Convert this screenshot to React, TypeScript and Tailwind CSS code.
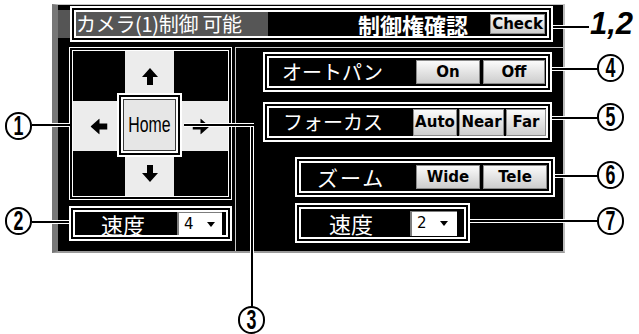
const jp = "font-['Noto_Sans_CJK_JP',sans-serif]";
const btn =
  "flex items-center justify-center overflow-hidden border border-[#8c8c8c] bg-linear-to-b from-[#fbfbfb] to-[#cdcdcd] font-['DejaVu_Sans',sans-serif] text-[15px] font-bold leading-none text-black";
const hl = "border-[6px] border-double border-white bg-black";

function Arrow({ className }: { className: string }) {
  return (
    <svg width="16" height="17" viewBox="0 0 16 17" className={className}>
      <path d="M8 0 L16 9 L11 9 L11 17 L5 17 L5 9 L0 9 Z" fill="black" />
    </svg>
  );
}

function Circled({ n, className }: { n: string; className: string }) {
  return (
    <div
      className={`absolute flex h-[28px] w-[27px] items-center justify-center rounded-full border-2 border-black bg-white ${className}`}
    >
      <span className="scale-x-[0.66] font-['Liberation_Sans',sans-serif] text-[27px] font-bold leading-none text-black">
        {n}
      </span>
    </div>
  );
}

function Select({ value, className }: { value: string; className: string }) {
  return (
    <div
      className={`flex items-center border-l-2 border-t border-[#7d7d7d] bg-white pl-[5px] ${className}`}
    >
      <span className="font-['DejaVu_Sans',sans-serif] text-[15px] leading-none text-black">{value}</span>
      <svg width="8" height="5" viewBox="0 0 8 5" className="ml-[13px]">
        <path d="M0 0 L8 0 L4 5 Z" fill="black" />
      </svg>
    </div>
  );
}

export default function App() {
  return (
    <div className="relative h-[334px] w-[639px] overflow-hidden bg-white">
      {/* camera panel */}
      <div className="ml-[52px] mt-[4px] flex h-[249px] w-[513px] flex-col border-b-2 border-l-[6px] border-r-2 border-t border-b-[#9a9a9a] border-l-[#777777] border-r-[#bdbdbd] border-t-[#c4c4c4] bg-black">
        {/* title */}
        <div className="mt-[1px] flex h-[36px] items-center">
          <div className="h-[28px] w-[12px] bg-[#555555]" />
          <div className={`h-[36px] w-[483px] ${hl}`}>
            <div className="flex h-full">
              <div
                className={`flex w-[192px] items-center whitespace-nowrap bg-[#565656] text-[20px] leading-none tracking-[-0.3px] text-white ${jp}`}
              >
                カメラ(1)制御 可能
              </div>
              <div className="flex flex-1 items-center justify-end">
                <span className={`text-[22px] font-bold leading-none text-white ${jp}`}>制御権確認</span>
                <div className={`ml-[22px] mr-[2px] h-[20px] w-[55px] ${btn}`}>Check</div>
              </div>
            </div>
          </div>
        </div>

        <div className="mt-[5px] flex flex-1">
          {/* left column */}
          <div className="ml-[11px] flex w-[163px] flex-col gap-[6px]">
            <div className="h-[153px] border-4 border-double border-white bg-black">
              <div className="grid h-full grid-cols-[52px_49px_1fr] grid-rows-[50px_50px_1fr]">
                <div />
                <div className="flex items-center justify-center bg-[#ececec]">
                  <Arrow className="" />
                </div>
                <div />
                <div className="flex items-center justify-center bg-[#ececec]">
                  <Arrow className="-rotate-90" />
                </div>
                <div className="relative bg-[#ececec]">
                  <div className={`absolute -bottom-[6px] -left-[8px] -right-[8px] -top-[8px] ${hl}`}>
                    <div className="flex h-full items-center justify-center border border-[#3a3a3a] bg-[#e6e6e6]">
                      <span className="scale-x-[0.72] font-['Liberation_Sans',sans-serif] text-[22px] leading-none text-black">
                        Home
                      </span>
                    </div>
                  </div>
                </div>
                <div className="flex items-center justify-center bg-[#ececec]">
                  <Arrow className="rotate-90" />
                </div>
                <div />
                <div className="flex items-center justify-center bg-[#ececec]">
                  <Arrow className="rotate-180" />
                </div>
                <div />
              </div>
            </div>
            <div className={`flex h-[35px] items-center ${hl}`}>
              <span className={`pl-[26px] text-[22px] leading-none text-white ${jp}`}>速度</span>
              <Select value="4" className="ml-auto mr-[4px] h-full w-[45px]" />
            </div>
          </div>

          {/* right column */}
          <div className="ml-[3px] flex flex-1 flex-col border-l border-t border-[#c8c8c8]">
            <div className={`ml-[27px] mt-[4px] flex h-[40px] w-[289px] items-center ${hl}`}>
              <span className={`pl-[13px] text-[20px] leading-none text-white ${jp}`}>オートパン</span>
              <div className="ml-auto mr-[1px] flex gap-[3px]">
                <div className={`h-[24px] w-[64px] ${btn}`}>On</div>
                <div className={`h-[24px] w-[62px] ${btn}`}>Off</div>
              </div>
            </div>
            <div className={`ml-[27px] mt-[10px] flex h-[40px] w-[289px] items-center ${hl}`}>
              <span className={`pl-[14px] text-[20px] leading-none text-white ${jp}`}>フォーカス</span>
              <div className="ml-auto flex gap-[2px]">
                <div className={`h-[27px] w-[44px] ${btn}`}>Auto</div>
                <div className={`h-[27px] w-[45px] ${btn}`}>Near</div>
                <div className={`h-[27px] w-[40px] ${btn}`}>Far</div>
              </div>
            </div>
            <div className={`ml-[59px] mt-[15px] flex h-[40px] w-[260px] items-center ${hl}`}>
              <span className={`pl-[16px] text-[21px] leading-none tracking-[2px] text-white ${jp}`}>ズーム</span>
              <div className="ml-auto mr-[2px] flex gap-[3px]">
                <div className={`h-[24px] w-[64px] ${btn}`}>Wide</div>
                <div className={`h-[24px] w-[64px] ${btn}`}>Tele</div>
              </div>
            </div>
            <div className={`ml-[59px] mt-[6px] flex h-[40px] w-[175px] items-center ${hl}`}>
              <span className={`pl-[28px] text-[22px] leading-none text-white ${jp}`}>速度</span>
              <Select value="2" className="ml-auto mr-[7px] h-[25px] w-[47px]" />
            </div>
          </div>
        </div>
      </div>

      {/* callout lines */}
      <div className="absolute left-[32px] top-[123px] h-[4px] w-[38px] border-y border-white bg-black" />
      <div className="absolute left-[32px] top-[220px] h-[4px] w-[37px] border-y border-white bg-black" />
      <div className="absolute left-[250px] top-[123px] h-[184px] w-[4px] border-x border-white bg-black" />
      <div className="absolute left-[184px] top-[123px] h-[4px] w-[70px] border-y border-white bg-black" />
      <div className="absolute left-[553px] top-[25px] h-[4px] w-[36px] border-y border-white bg-black" />
      <div className="absolute left-[552px] top-[67px] h-[4px] w-[46px] border-y border-white bg-black" />
      <div className="absolute left-[552px] top-[116px] h-[4px] w-[46px] border-y border-white bg-black" />
      <div className="absolute left-[555px] top-[174px] h-[4px] w-[43px] border-y border-white bg-black" />
      <div className="absolute left-[470px] top-[219px] h-[4px] w-[128px] border-y border-white bg-black" />

      {/* callout numbers */}
      <Circled n="1" className="left-[5px] top-[112px]" />
      <Circled n="2" className="left-[5px] top-[207px]" />
      <Circled n="3" className="left-[238px] top-[306px]" />
      <Circled n="4" className="left-[597px] top-[54px]" />
      <Circled n="5" className="left-[597px] top-[103px]" />
      <Circled n="6" className="left-[597px] top-[161px]" />
      <Circled n="7" className="left-[597px] top-[207px]" />
      <div className="absolute left-[590px] top-[8px] font-['Liberation_Sans',sans-serif] text-[31px] font-bold italic leading-none text-black">
        1,2
      </div>
    </div>
  );
}
